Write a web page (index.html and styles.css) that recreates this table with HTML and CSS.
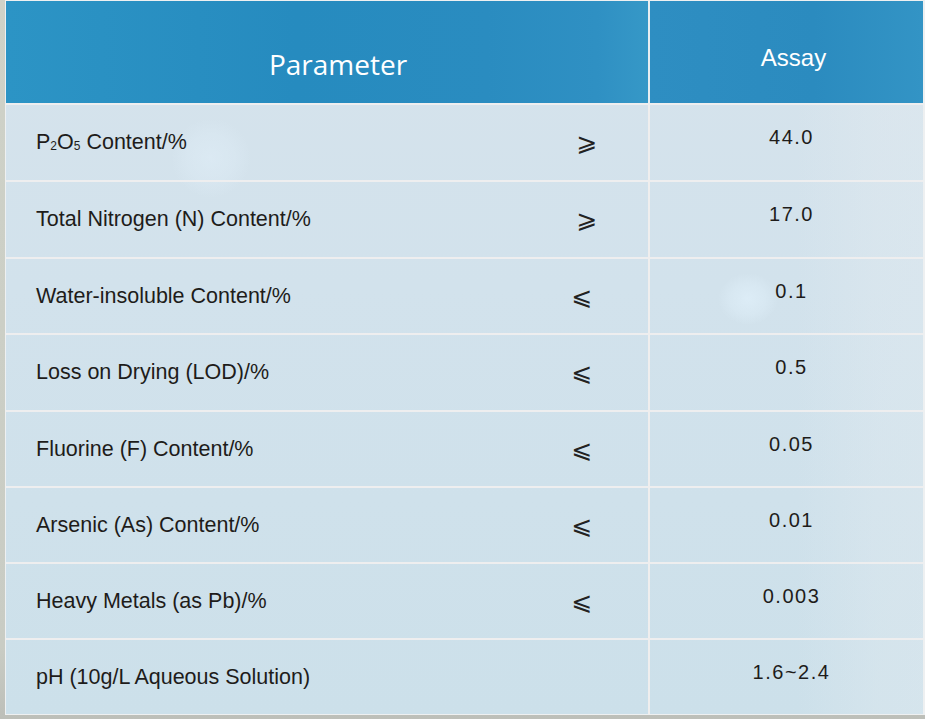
FILE: index.html
```html
<!DOCTYPE html>
<html lang="en">
<head>
<meta charset="utf-8">
<title>Parameter / Assay</title>
<link rel="stylesheet" href="styles.css">
</head>
<body>
<div class="sheet">
  <div class="grid">
    <div class="cell head head-param">Parameter</div>
    <div class="cell head head-assay">Assay</div>

    <div class="cell label"><span class="name">P<sub>2</sub>O<sub>5</sub> Content/%</span><span class="sign ge">⩾</span></div>
    <div class="cell value">44.0</div>

    <div class="cell label"><span class="name">Total Nitrogen (N) Content/%</span><span class="sign ge">⩾</span></div>
    <div class="cell value">17.0</div>

    <div class="cell label"><span class="name">Water-insoluble Content/%</span><span class="sign le">⩽</span></div>
    <div class="cell value">0.1</div>

    <div class="cell label"><span class="name">Loss on Drying (LOD)/%</span><span class="sign le">⩽</span></div>
    <div class="cell value">0.5</div>

    <div class="cell label"><span class="name">Fluorine (F) Content/%</span><span class="sign le">⩽</span></div>
    <div class="cell value">0.05</div>

    <div class="cell label"><span class="name">Arsenic (As) Content/%</span><span class="sign le">⩽</span></div>
    <div class="cell value">0.01</div>

    <div class="cell label"><span class="name">Heavy Metals (as Pb)/%</span><span class="sign le">⩽</span></div>
    <div class="cell value">0.003</div>

    <div class="cell label last"><span class="name">pH (10g/L Aqueous Solution)</span><span class="sign"></span></div>
    <div class="cell value last">1.6~2.4</div>
  </div>
</div>
</body>
</html>
```

FILE: styles.css
```css
html, body {
  margin: 0;
  padding: 0;
}

body {
  width: 925px;
  height: 719px;
  overflow: hidden;
  background: linear-gradient(180deg, #cfd2c8 0%, #c9ccc4 90%, #bdbfb9 100%);
  font-family: "Liberation Sans", Arial, sans-serif;
}

.sheet {
  margin-left: 5px;
  width: 920px;
  height: 715px;
  box-sizing: border-box;
  border: 1px solid #eef0f1;
  border-right-width: 2px;
  background:
    radial-gradient(circle at 205px 157px, rgba(226, 240, 250, 0.5) 0, rgba(226, 240, 250, 0.28) 24px, rgba(226, 240, 250, 0) 40px),
    radial-gradient(ellipse 30px 26px at 742px 298px, rgba(226, 242, 252, 0.65) 0, rgba(226, 242, 252, 0.35) 60%, rgba(226, 242, 252, 0) 100%),
    linear-gradient(90deg, rgba(232, 238, 242, 0) 0, rgba(232, 238, 242, 0) 790px, rgba(232, 238, 242, 0.28) 870px, rgba(232, 238, 242, 0.32) 920px),
    linear-gradient(180deg, #d6e3ec 0%, #d2e2ec 40%, #cce0ea 100%);
}

.grid {
  display: grid;
  grid-template-columns: 644px 1fr;
  grid-template-rows: 104px 77px 77px 76px 77px 76px 76px 76px 1fr;
  height: 100%;
}

.cell {
  display: flex;
  align-items: center;
  box-sizing: border-box;
  border-bottom: 2px solid #eeeeef;
}

.cell.last {
  border-bottom: none;
}

.label {
  border-right: 2px solid #efeeee;
  padding-left: 30px;
  font-size: 21.5px;
  color: #1e1c1a;
}

.head {
  color: #ffffff;
  background: linear-gradient(90deg, #2c94c5 0%, #268bbf 45%, #2a8cc0 75%, #2f90c3 92%, #3698c7 100%);
}

.head-param {
  border-right: 2px solid #e9eef1;
  justify-content: center;
  padding-left: 22px;
  padding-top: 24px;
  font-family: "Open Sans", "Noto Sans", sans-serif;
  font-size: 28px;
}

.head-assay {
  justify-content: center;
  padding-left: 14px;
  padding-top: 12px;
  font-size: 24px;
  background: linear-gradient(90deg, #2e8ec2 0%, #2b8bbf 60%, #3394c5 100%);
}

.name {
  flex: 1;
}

.name sub {
  font-size: 12px;
  vertical-align: baseline;
  position: relative;
  top: 1px;
}

.sign {
  width: 28px;
  text-align: center;
  font-family: "DejaVu Sans", sans-serif;
  font-size: 25px;
  line-height: 1;
  color: #222;
}

.sign.ge {
  margin-right: 47px;
}

.sign.le {
  margin-right: 52px;
}

.value {
  justify-content: center;
  padding-left: 10px;
  padding-bottom: 10px;
  font-size: 20px;
  letter-spacing: 1.5px;
  color: #1e1c1a;
}
```
